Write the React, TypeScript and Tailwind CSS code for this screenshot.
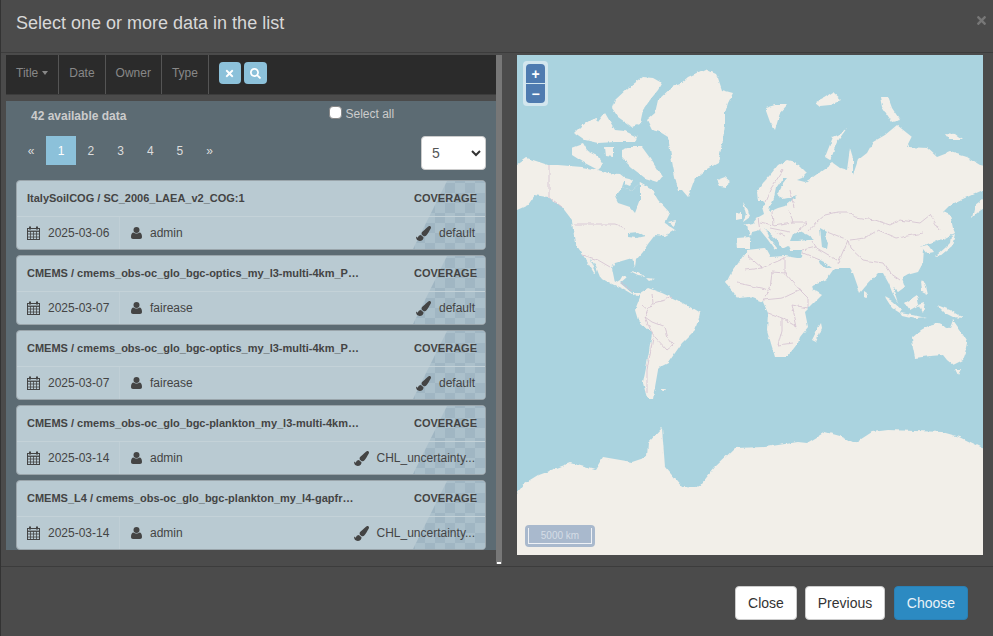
import { FaPaintBrush, FaTimes, FaSearch } from "react-icons/fa";

const rows = [
  { title: "ItalySoilCOG / SC_2006_LAEA_v2_COG:1", date: "2025-03-06", owner: "admin", style: "default" },
  { title: "CMEMS / cmems_obs-oc_glo_bgc-optics_my_l3-multi-4km_P…", date: "2025-03-07", owner: "fairease", style: "default" },
  { title: "CMEMS / cmems_obs-oc_glo_bgc-optics_my_l3-multi-4km_P…", date: "2025-03-07", owner: "fairease", style: "default" },
  { title: "CMEMS / cmems_obs-oc_glo_bgc-plankton_my_l3-multi-4km…", date: "2025-03-14", owner: "admin", style: "CHL_uncertainty..." },
  { title: "CMEMS_L4 / cmems_obs-oc_glo_bgc-plankton_my_l4-gapfr…", date: "2025-03-14", owner: "admin", style: "CHL_uncertainty..." },
];

// map shapes, in page coordinates (viewBox starts at the map's corner)
const land = [
  // greenland, ellesmere
  "M647 120L655 113L658 100L672 87L680 84L688 77L705 69L716 74L718 78L722 90L733 93L728 103L725 113L725 125L723 140L718 163L705 170L695 178L688 197L682 190L678 190L673 167L668 137L660 132L652 130Z",
  "M662 83L653 78L643 77L628 88L615 100L612 108L618 117L632 127L640 124L643 110L650 100L658 90Z",
  // canadian islands
  "M575 133L583 125L595 117L598 122L605 113L615 130L625 131L637 137L635 142L615 142L598 143L585 140Z",
  "M572 147L583 143L587 150L597 155L603 165L598 170L583 162L572 155Z",
  "M605 147L613 147L613 157L606 156Z",
  "M622 150L630 147L642 147L650 158L662 177L658 182L645 178L632 168L622 158Z",
  "M625 178L633 180L630 186L625 184Z",
  // north america
  "M505 168L517 165L527 158L548 165L558 165L582 167L598 170L608 173L620 174L625 178L622 187L632 190L640 183L652 190L658 200L670 213L665 223L675 230L665 236L655 235L648 244L643 252L636 260L635 267L632 258L615 263L612 268L615 283L620 280L623 275L627 277L620 283L632 293L640 293L637 297L625 290L612 284L600 277L596 267L590 258L596 272L594 273L583 255L575 243L573 230L572 220L562 207L548 197L535 195L528 205L517 210L505 214Z",
  "M630 272L638 273L645 277L638 276Z",
  "M647 278L655 279L650 281Z",
  "M668 222L676 220L674 226Z",
  // south america
  "M640 293L648 288L656 291L662 293L677 300L690 307L700 313L698 322L695 330L682 343L675 353L668 363L662 366L658 370L655 387L653 398L647 398L643 383L647 363L652 333L638 320L635 310L640 297Z",
  "M660 388L666 388L664 391Z",
  // africa
  "M726 283L730 275L737 265L747 250L765 248L770 257L785 256L797 258L802 258L805 270L812 289L822 295L805 312L808 327L800 337L798 343L787 357L775 357L767 330L768 313L763 302L750 297L738 298Z",
  // eurasia
  "M738 248L737 238L750 237L747 226L743 225L753 223L757 218L764 214L762 207L766 204L763 201L758 201L757 192L763 183L770 175L778 165L787 160L795 162L800 166L807 173L802 178L797 180L805 182L813 177L820 172L833 163L840 168L847 170L850 148L853 158L853 175L858 160L867 153L873 142L885 135L897 125L912 137L907 147L927 148L937 157L950 152L967 157L980 165L995 168L995 186L983 190L965 198L950 205L943 212L950 215L953 228L955 233L945 238L930 243L920 247L928 245L933 252L928 253L924 248L923 263L918 272L907 275L902 278L905 287L898 292L893 287L898 303L892 292L889 284L883 273L878 273L865 287L860 293L853 273L850 268L835 268L833 270L826 280L810 287L798 260L802 257L803 250L790 250L788 246L784 248L782 248L778 241L768 232L764 228L768 236L778 248L775 250L768 240L760 230L752 232L750 240L750 248Z",
  // islands
  "M912 338L921 330L930 325L938 323L950 328L953 320L960 330L968 343L966 352L963 360L953 365L947 360L943 355L930 356L915 358L913 348Z",
  "M955 369L961 369L958 375Z",
  "M812 340L818 328L821 323L822 328L816 342Z",
  "M864 291L867 293L866 297L864 296Z",
  "M885 297L892 301L902 310L900 313L892 308Z",
  "M900 313L912 315L927 318L915 319L902 316Z",
  "M905 303L917 295L919 305L910 310Z",
  "M919 305L925 303L923 313L921 310Z",
  "M937 305L950 310L963 318L953 317L945 313Z",
  "M921 280L925 282L928 295L922 292Z",
  "M935 257L945 248L950 243L951 236L955 234L952 246L940 256Z",
  "M717 180L725 177L731 182L725 187L720 186Z",
  "M743 202L748 210L750 217L743 222L746 214Z",
  "M736 213L741 212L741 219L736 220Z",
  "M765 108L775 105L787 105L780 113L775 130L770 122Z",
  "M815 102L825 97L833 92L842 100L830 105L820 106Z",
  "M847 128L838 135L833 137L825 157L830 160L837 142Z",
  "M880 97L888 97L892 108L900 120L892 122L882 107Z",
  "M945 133L955 134L963 140L950 140Z",
  "M995 190L975 205L972 218L977 213L995 200Z",
  "M505 500L517 493L525 483L538 475L570 463L595 470L603 457L632 462L647 457L648 443L662 428L665 467L682 487L698 488L715 467L735 448L765 447L798 442L807 443L825 432L840 436L855 443L872 432L888 430L942 432L960 437L983 448L995 452L995 570L505 570Z",
];

const water = [
  "M615 197L622 187L632 190L640 183L640 200L635 213L630 207L618 203Z",
  "M769 212L778 208L785 206L790 202L797 195L788 198L783 199L777 195L783 183L787 178L783 178L776 188L774 198L770 206Z",
  "M790 241L793 234L800 231L808 235L815 240L808 240L798 241Z",
  "M820 228L827 232L824 237L828 243L827 249L822 247L821 238Z",
  "M818 259L824 262L832 268L826 268L820 264Z",
  "M628 233L638 232L645 236L636 238L628 237Z",
];

const borders =
  "M549 165L549 197L562 207M575 224L615 224L625 228M583 255L598 260L610 267M621 283L632 290M642 305L648 310L645 317L652 322L665 327L668 337L673 345L667 350L655 337L652 333M653 338L647 370L647 393M652 293L653 303L665 300L672 297M648 310L653 303M645 317L652 333 M747 255L762 268L785 258M785 257L785 273L772 272L770 290L763 300L783 298L800 290L808 298L808 308L792 305L797 327L782 318L768 313M782 330L778 345L793 343M785 273L800 290M738 283L770 290M745 270L762 268M782 318L782 330M758 217L760 230M772 212L773 225L760 222M788 210L793 222L807 222L798 230M793 222L773 225M783 170L770 190L765 202M790 190L794 208M817 222L825 215L838 212L848 212L855 217L875 220L890 225L900 220L920 223L930 215L940 230M817 222L808 232M828 232L848 240L838 263M812 242L815 247L837 260M815 247L803 250M878 230L897 238L923 233M850 248L863 260L883 263L890 273L900 280M848 240L850 248M878 230L865 238L850 240M820 260L803 253M770 228L790 232M785 236L775 232";

function MapPanel() {
  return (
    <div className="relative h-[500px] w-[466px] overflow-hidden bg-[#aad3df]">
      <svg viewBox="517 55 466 500" className="block h-full w-full">
        <defs>
          <filter id="coast" filterUnits="userSpaceOnUse" x="495" y="40" width="510" height="540">
            <feTurbulence type="fractalNoise" baseFrequency="0.14" numOctaves="3" seed="4" />
            <feDisplacementMap in="SourceGraphic" scale="3.5" xChannelSelector="R" yChannelSelector="G" />
            <feGaussianBlur stdDeviation="0.3" />
          </filter>
        </defs>
        <g filter="url(#coast)">
          <path d={land.join(" ")} fill="#f2efe9" />
          <path d={water.join(" ")} fill="#aad3df" />
          <path d={borders} fill="none" stroke="#d3c0d0" strokeWidth="0.8" />
        </g>
      </svg>
      <div className="absolute left-1.5 top-1.5 flex flex-col gap-px rounded bg-[#d3e6ee] p-[3px]">
        <button className="flex h-[19px] w-[19px] items-center justify-center rounded-t-sm bg-[#4f7bb0] text-sm font-bold leading-none text-white">+</button>
        <button className="flex h-[19px] w-[19px] items-center justify-center rounded-b-sm bg-[#4f7bb0] text-sm font-bold leading-none text-white">−</button>
      </div>
      <div className="absolute bottom-2 left-2 flex h-[22px] w-[70px] rounded bg-[#a9b9cd] p-[3px]">
        <div className="flex w-full items-center justify-center border border-t-0 border-white/80 text-[10px] text-[#d5dde6]">5000 km</div>
      </div>
    </div>
  );
}

function CalendarIcon() {
  return (
    <svg width="13" height="14" viewBox="0 0 13 14" fill="none" stroke="#444" strokeWidth="1">
      <rect x="0.5" y="2.5" width="12" height="11" />
      <path d="M0 5h13M0 5.5h13M0 8h13M0 11h13M3.5 5v9M6.5 5v9M9.5 5v9" strokeWidth="0.8" />
      <path d="M3 0.5v3M10 0.5v3" strokeWidth="2" />
    </svg>
  );
}

function UserIcon() {
  return (
    <svg width="11" height="12" viewBox="0 0 11 12" fill="#444">
      <circle cx="5.5" cy="3" r="3" />
      <path d="M0 10c0-3 1-4.500 2.500-4.500 1 .8 2 1 3 1s2-.2 3-1C10 5.500 11 7 11 10c0 1.200-.8 2-2 2H2c-1.200 0-2-.8-2-2z" />
    </svg>
  );
}

function DataCard({ title, date, owner, style }: (typeof rows)[number]) {
  return (
    <div className="relative h-[70px] overflow-hidden rounded border border-[#9aa5ab] bg-[#b9cad2] text-[#444]">
      <svg className="absolute inset-0 h-full w-full" aria-hidden="true">
        <defs>
          <pattern id="checks" width="20" height="20" patternUnits="userSpaceOnUse" x="8" y="2">
            <rect width="20" height="20" fill="#abc0cb" />
            <rect width="10" height="10" fill="#a0b6c3" />
            <rect x="10" y="10" width="10" height="10" fill="#a0b6c3" />
          </pattern>
        </defs>
        <polygon points="430,0 470,0 470,70 395,70" fill="url(#checks)" />
        <line x1="418" y1="35.500" x2="470" y2="35.500" stroke="#d6e0e5" />
      </svg>
      <div className="relative flex h-[35px] items-center justify-between pl-2.5 pr-2 text-[11px] font-bold">
        <div>{title}</div>
        <div>COVERAGE</div>
      </div>
      <div className="relative flex h-[33px] items-center border-t border-[#c4d2d8] text-xs">
        <div className="flex h-full w-[103px] items-center gap-2 border-r border-[#c0cfd6] pl-2.5">
          <CalendarIcon />
          <span>{date}</span>
        </div>
        <div className="flex items-center gap-2 pl-[11px]">
          <UserIcon />
          <span>{owner}</span>
        </div>
        <div className="ml-auto flex items-center gap-2 pr-2.5">
          <FaPaintBrush className="text-[15px]" />
          <span>{style}</span>
        </div>
      </div>
    </div>
  );
}

export default function App() {
  return (
    <div className="relative h-[636px] w-[993px] overflow-hidden border-l border-[#333] bg-[#4b4b4b] font-['Liberation_Sans',Arial,sans-serif]">
      <header className="flex h-[53px] items-start border-b border-[#3c3c3c] pl-[15px] pt-[11px]">
        <h4 className="text-lg leading-6 text-[#d8d8d8]">Select one or more data in the list</h4>
        <span className="absolute right-[5px] top-[14px] text-[#777]">
          <FaTimes className="text-[13px]" />
        </span>
      </header>

      <main className="flex h-[514px] border-b border-[#3c3c3c] pl-[5px] pt-[2px]">
        <div className="w-[490px]">
          <div className="flex h-10 items-stretch border-b border-[#3c3c3c] bg-[#2b2b2b] text-xs text-[#888]">
            <div className="flex items-center gap-1 border-r border-[#555] px-2.5 pb-[3px]">
              Title<span className="border-x-[3.500px] border-t-4 border-x-transparent border-t-[#888]" />
            </div>
            <div className="flex items-center border-r border-[#555] px-2.5 pb-[3px]">Date</div>
            <div className="flex items-center border-r border-[#555] px-2.5 pb-[3px]">Owner</div>
            <div className="flex items-center border-r border-[#555] px-2.5 pb-[3px]">Type</div>
            <div className="flex items-center gap-[3px] pb-[3px] pl-2.5">
              <button className="flex h-[22px] w-[22px] items-center justify-center rounded bg-[#8cc1da] text-[11px] text-white"><FaTimes /></button>
              <button className="flex h-[22px] w-[23px] items-center justify-center rounded bg-[#8cc1da] text-[11px] text-white"><FaSearch /></button>
            </div>
          </div>
          <div className="mt-1.5 h-[449px] bg-[#5c6b73] pt-1">
            <div className="relative h-[75px]">
              <div className="pl-[25px] pt-[2.500px] text-xs font-bold text-[#ccc]">42 available data</div>
              <label className="absolute left-[322.500px] top-px flex items-start gap-1 text-xs text-[#ccc]">
                <span className="h-[13px] w-[13px] rounded-sm border border-[#888] bg-white" />
                <span>Select all</span>
              </label>
              <div className="absolute left-[10px] top-[31px] flex text-xs text-[#ddd]">
                <span className="flex h-[29px] w-[30px] items-center justify-center">«</span>
                <span className="flex h-[29px] w-[30px] items-center justify-center bg-[#8cc1da] text-white">1</span>
                {["2", "3", "4", "5", "»"].map((p) => (
                  <span key={p} className="flex h-[29px] w-[29.7px] items-center justify-center">{p}</span>
                ))}
              </div>
              <div className="absolute left-[415px] top-[31px] flex h-[34px] w-[65px] items-center justify-between rounded border border-[#ccc] bg-white pl-2.5 pr-1 text-sm text-[#555]">
                5
                <svg width="10" height="8" viewBox="0 0 10 8"><path d="M1 2l4 4 4-4" fill="none" stroke="#333" strokeWidth="2" /></svg>
              </div>
            </div>
            <div className="flex flex-col gap-[5px] px-2.5">
              {rows.map((r, i) => (
                <DataCard key={i} {...r} />
              ))}
            </div>
          </div>
        </div>
        <div className="relative h-[509px] w-1.5 bg-[#777]">
          <div className="absolute bottom-0 left-px h-0.5 w-1 bg-white" />
        </div>
        <div className="ml-[15px]">
          <MapPanel />
        </div>
      </main>

      <footer className="flex justify-end gap-2 pr-[25px] pt-[19px]">
        <button className="h-[34px] w-[62px] rounded border border-[#ccc] bg-white text-sm text-[#333]">Close</button>
        <button className="h-[34px] w-[80px] rounded border border-[#ccc] bg-white text-sm text-[#333]">Previous</button>
        <button className="ml-px h-[34px] w-[74px] rounded border border-[#2a80b5] bg-[#2c8ac2] text-sm text-[#e8f2f8]">Choose</button>
      </footer>
    </div>
  );
}
